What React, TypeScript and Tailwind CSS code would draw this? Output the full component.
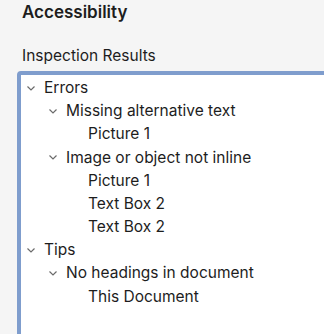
import React from "react";

type Node = { label: string; level: number; open?: boolean };

const rows: Node[] = [
  { label: "Errors", level: 0, open: true },
  { label: "Missing alternative text", level: 1, open: true },
  { label: "Picture 1", level: 2 },
  { label: "Image or object not inline", level: 1, open: true },
  { label: "Picture 1", level: 2 },
  { label: "Text Box 2", level: 2 },
  { label: "Text Box 2", level: 2 },
  { label: "Tips", level: 0, open: true },
  { label: "No headings in document", level: 1, open: true },
  { label: "This Document", level: 2 },
];

function Chevron() {
  return (
    <svg width="10" height="10" viewBox="0 0 10 10" className="shrink-0">
      <path d="M1.5 3.5 L5 7 L8.5 3.5" fill="none" stroke="#6b6b6b" strokeWidth="1.2" />
    </svg>
  );
}

const indent = ["pl-[5px]", "pl-[27px]", "pl-[49px]"];

export default function App() {
  return (
    <div
      className="h-[334px] w-[324px] overflow-hidden bg-[#f5f5f5] text-[#1d1d1d]"
      style={{ fontFamily: "Inter, 'Liberation Sans', sans-serif" }}
    >
      <div className="px-[22px] pt-[1px] text-[17px] font-semibold leading-[22px]">Accessibility</div>
      <div className="mt-[23px] px-[22px] text-[15.5px] leading-[20px]">Inspection Results</div>
      <div className="ml-[17px] mt-[5px] h-[300px] w-[330px] rounded-tl-[4px] border-[4px] border-[#7f9dcd] bg-white">
        <div className="pt-[1px]">
          {rows.map((r, i) => (
            <div
              key={i}
              className={`flex h-[23.2px] items-center text-[15.5px] ${indent[r.level]}`}
            >
              {r.open ? (
                <span className="mr-[8px] flex w-[10px] items-center">
                  <Chevron />
                </span>
              ) : (
                <span className="mr-[8px] w-[10px]" />
              )}
              <span>{r.label}</span>
            </div>
          ))}
        </div>
      </div>
    </div>
  );
}
